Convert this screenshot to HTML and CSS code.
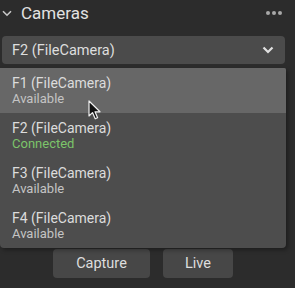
FILE: index.html
```html
<!DOCTYPE html>
<html>
<head>
<meta charset="utf-8">
<link rel="stylesheet" href="styles.css">
</head>
<body>
<div class="panel">
  <div class="header">
    <svg class="collapse" width="10" height="7" viewBox="0 0 10 7"><path d="M1 1.2 L5 5.2 L9 1.2" fill="none" stroke="#c8c8c8" stroke-width="1.6"/></svg>
    <span class="title">Cameras</span>
    <span class="dots"><i></i><i></i><i></i></span>
  </div>
  <div class="combo">
    <span class="combo-text">F2 (FileCamera)</span>
    <svg width="12" height="8" viewBox="0 0 12 8"><path d="M1.5 1.5 L6 6 L10.5 1.5" fill="none" stroke="#e0e0e0" stroke-width="2.2"/></svg>
  </div>
  <div class="actions">
    <button class="btn btn-capture">Capture</button>
    <button class="btn btn-live">Live</button>
  </div>
  <ul class="popup">
    <li class="item hover"><span class="name">F1 (FileCamera)</span><span class="status">Available</span></li>
    <li class="item"><span class="name">F2 (FileCamera)</span><span class="status connected">Connected</span></li>
    <li class="item"><span class="name">F3 (FileCamera)</span><span class="status">Available</span></li>
    <li class="item"><span class="name">F4 (FileCamera)</span><span class="status">Available</span></li>
  </ul>
  <svg class="cursor" width="14" height="21" viewBox="0 0 14 21"><path d="M1 1 L1 16 L4.5 12.6 L7.2 18.8 L9.6 17.8 L7 11.8 L12 11.8 Z" fill="#111" stroke="#f0f0f0" stroke-width="1.2" stroke-linejoin="round"/></svg>
</div>
</body>
</html>
```
FILE: styles.css
```css
html, body {
  margin: 0;
  padding: 0;
  background: #2c2c2c;
}
body {
  width: 295px;
  height: 288px;
  overflow: hidden;
  font-family: Roboto, "Noto Sans", sans-serif;
  color: #dadada;
}
.panel {
  position: relative;
  width: 286px;
}
.header {
  display: flex;
  align-items: center;
  height: 26px;
  padding-left: 2px;
}
.collapse {
  display: block;
}
.title {
  margin-left: 9px;
  font-size: 17px;
  color: #e2e2e2;
}
.dots {
  margin-left: auto;
  margin-right: 4px;
  display: flex;
  gap: 2px;
}
.dots i {
  display: block;
  width: 4px;
  height: 4px;
  border-radius: 50%;
  background: #a8a8a8;
}
.combo {
  margin: 10px 0 0 2px;
  width: 283px;
  height: 28px;
  box-sizing: border-box;
  border-radius: 4px;
  background: #4b4b4b;
  display: flex;
  align-items: center;
  justify-content: space-between;
  padding: 0 11px 0 10px;
}
.combo-text {
  font-size: 14.5px;
  color: #dedede;
}
.combo svg {
  display: block;
}
.actions {
  margin-top: 185px;
  display: flex;
  justify-content: center;
  gap: 13px;
}
.btn {
  height: 29px;
  border: none;
  border-radius: 4px;
  background: #474747;
  color: #dedede;
  font-family: inherit;
  font-size: 14.5px;
  padding: 0;
}
.btn-capture { width: 97px; }
.btn-live { width: 70px; }
.popup {
  position: absolute;
  left: 0;
  top: 68px;
  width: 286px;
  height: 180px;
  margin: 0;
  padding: 0;
  list-style: none;
  background: #4d4d4d;
  border-radius: 0 2px 4px 4px;
  box-shadow: 2px 2px 4px rgba(0,0,0,0.35);
}
.item {
  height: 45px;
  box-sizing: border-box;
  padding: 8px 12px 0;
  display: flex;
  flex-direction: column;
}
.item.hover {
  background: #676767;
  border-radius: 0 2px 0 0;
}
.name {
  font-size: 14px;
  line-height: 15px;
  color: #dcdcdc;
}
.status {
  font-size: 13px;
  line-height: 16px;
  color: #c4c4c4;
}
.status.connected {
  color: #7cc46a;
}
.cursor {
  position: absolute;
  left: 88px;
  top: 100px;
}
```
